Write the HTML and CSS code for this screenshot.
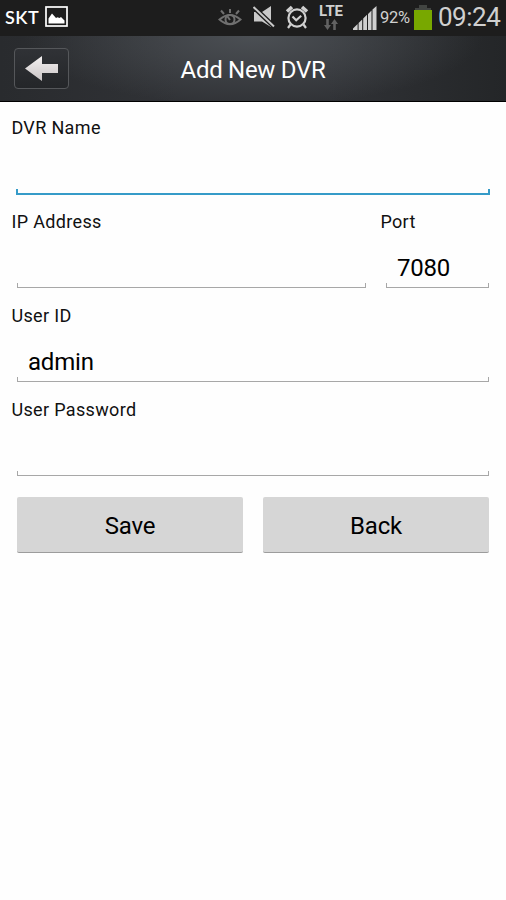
FILE: index.html
```html
<!DOCTYPE html>
<html lang="en">
<head>
<meta charset="utf-8">
<meta name="viewport" content="width=device-width">
<title>Add New DVR</title>
<link rel="stylesheet" href="styles.css">
</head>
<body>
<div class="status">
  <span class="carrier">SKT</span>
  <svg class="picture" width="23" height="21" viewBox="0 0 23 21"><rect x="1" y="1" width="21" height="19" fill="none" stroke="#fff" stroke-width="1.7"/><path d="M3.500 17.500v-5l3.500-5 4 4.500 1.500-.8 2 .8 1.500-1 3.500 3.500v3z" fill="#fff"/></svg>
  <svg class="eye" width="24" height="20" viewBox="0 0 24 20" fill="none" stroke="#707070" stroke-width="2"><path d="M1.500 12.500Q12 3.500 22.500 12.500Q12 22 1.500 12.500z"/><circle cx="12" cy="12.500" r="4.500"/><path d="M12 13l-2.500-3.500M12 6V2M6 7L3 3.500M18 7l3-3.500"/></svg>
  <svg class="mute" width="22" height="23" viewBox="0 0 22 23"><path d="M1 6h8l9-6v21L9 15.500H1z" fill="#c9c9c9"/><path d="M0 .5l21 20" stroke="#1d1d1d" stroke-width="4.600"/><path d="M.5 1l20.500 19.500" stroke="#c9c9c9" stroke-width="2"/></svg>
  <svg class="alarm" width="24" height="24" viewBox="0 0 24 24" fill="none" stroke="#d0d0d0" stroke-width="2.200"><circle cx="12" cy="13" r="8.600"/><path d="M7.500 11.500l3.700 3.700 5-4.500M5.500 19.500L3 23M18.500 19.500L21 23"/><path d="M2 6.500L7 2M22 6.500L17 2" stroke-width="3.600"/></svg>
  <div class="network"><span class="lte">LTE</span><svg width="14" height="11" viewBox="0 0 14 11" fill="#626262"><path d="M2.200 0h2.600v6H7l-3.500 5L0 6h2.200zM9.200 11h2.600V5H14l-3.500-5L7 5h2.200z"/></svg></div>
  <svg class="signal" width="24" height="24" viewBox="0 0 24 24" fill="#cfcfcf"><path d="M0 24v-1.500L4.600 18v6zM5.600 24v-7l3.600-3.500V24zM10.200 24V12.500l3.800-3.700V24zM15 24V8l3.500-3.600V24zM19.500 24V3.500L23.500 0v24z"/></svg>
  <span class="percent">92%</span>
  <svg class="battery" width="18" height="25" viewBox="0 0 18 25"><path d="M5 0h8v3h4v2H1V3h4z" fill="#424542"/><path d="M0 5h18v20H0z" fill="#78a800"/></svg>
  <span class="clock">09:24</span>
</div>
<header class="header">
  <div class="return"><svg width="33" height="25" viewBox="0 0 33 25"><defs><linearGradient id="arrow" x2="0" y2="1"><stop stop-color="#f4f1f1"/><stop offset="1" stop-color="#c9c4c5"/></linearGradient></defs><path d="M0 12.500L17 0v8h16v9H17v8z" fill="url(#arrow)"/></svg></div>
  <h1>Add New DVR</h1>
</header>
<main class="form">
  <div class="group"><label>DVR Name</label><div class="field focused"></div></div>
  <div class="row">
    <div class="group"><label>IP Address</label><div class="field"></div></div>
    <div class="group"><label>Port</label><div class="field">7080</div></div>
  </div>
  <div class="group"><label>User ID</label><div class="field">admin</div></div>
  <div class="group"><label>User Password</label><div class="field"></div></div>
  <div class="actions"><button type="button">Save</button><button type="button">Back</button></div>
</main>
</body>
</html>
```
FILE: styles.css
```css
* { box-sizing: border-box; }
body { margin: 0; height: 900px; background: #fefefe; font-family: Roboto, "Liberation Sans", sans-serif; color: #111; overflow: hidden; }
svg { display: block; flex: none; }
.status { height: 36px; background: #1d1d1d; display: flex; align-items: flex-start; color: #d0d0d0; white-space: nowrap; }
.carrier { width: 40px; margin-left: 5px; padding-top: 6px; font: 600 18px/22px Lato, sans-serif; color: #fff; letter-spacing: .5px; }
.picture { margin-top: 6px; }
.eye { margin: 7px 0 0 150px; }
.mute { margin: 6px 0 0 11px; }
.alarm { margin: 5px 0 0 10px; }
.network { width: 26px; margin: 4px 0 0 9px; display: flex; flex-direction: column; align-items: center; }
.lte { font-size: 15px; line-height: 14px; font-weight: 700; letter-spacing: -.1px; }
.network svg { margin-top: 1px; }
.signal { margin: 6px 0 0 9px; }
.percent { width: 34px; margin-left: 3px; padding-top: 7px; font-size: 16.500px; line-height: 22px; letter-spacing: -.3px; }
.battery { margin-top: 5px; }
.clock { margin-left: 6px; padding-top: 2px; font-size: 26px; line-height: 30px; letter-spacing: -.5px; }
.header { height: 66px; border-bottom: 1px solid #000; background: radial-gradient(ellipse 230px 70px at 50% 0, rgba(90,95,100,.65), transparent) border-box, linear-gradient(90deg, #292b2e, #303236 35%, #303236 65%, #242628); display: grid; grid-template-columns: 100px 1fr 100px; align-items: center; }
.return { width: 55px; height: 41px; margin-left: 14px; border: 1px solid #55575a; border-radius: 4px; background: linear-gradient(#303236, #242629); display: flex; align-items: center; justify-content: center; }
h1 { margin: 3px 0 0; text-align: center; font-size: 24px; line-height: 30px; font-weight: 400; color: #fff; letter-spacing: -.3px; }
.form { padding: 13px 11px 0; }
.group { height: 94px; }
label { display: block; height: 24px; font-size: 18px; line-height: 25px; letter-spacing: .35px; padding-left: .4px; }
.field { height: 55px; margin: 0 6px; position: relative; border-bottom: 1px solid #a7a7a7; font-size: 24px; line-height: 71px; padding-left: 11px; letter-spacing: -.2px; color: #000; }
.field::before, .field::after { content: ""; position: absolute; bottom: 0; width: 1px; height: 4px; background: #a7a7a7; }
.field::before { left: 0; }
.field::after { right: 0; }
.focused { height: 56px; margin: 0 5px 0 5px; border-bottom: 2px solid #359bc8; }
.focused::before, .focused::after { width: 2px; background: #359bc8; }
.row { display: grid; grid-template-columns: 361px 115px; column-gap: 8px; }
.actions { display: grid; grid-template-columns: 1fr 1fr; gap: 20px; margin: 6px 6px 0; }
button { height: 56px; padding: 1px 0 0; border: 0; border-bottom: 1px solid #9c9c9c; border-radius: 2px; background: #d6d6d6; font: 24px/56px Roboto, sans-serif; letter-spacing: -.2px; color: #000; }
```
